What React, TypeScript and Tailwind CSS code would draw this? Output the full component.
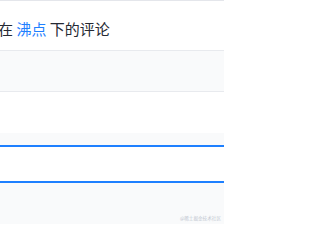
export default function App() {
  return (
    <div
      className="w-[224px] h-[224px] overflow-hidden bg-white flex flex-col"
      style={{ fontFamily: '"Noto Sans CJK SC", "Liberation Sans", sans-serif' }}
    >
      {/* 标题行 */}
      <div className="h-[50px] shrink-0 border-t border-[#e4e6eb] flex items-center pt-[5px] overflow-hidden">
        <div className="-ml-[2px] whitespace-nowrap text-[15px] leading-none text-[#252933]">
          在 <span className="text-[#1e80ff]">沸点</span> 下的评论
        </div>
      </div>
      {/* 引用块 */}
      <div className="h-[42px] shrink-0 bg-[#f9fafb] border-y border-[#e8eaee]" />
      <div className="h-[41px] shrink-0 bg-white" />
      {/* 输入区 */}
      <div className="flex-1 bg-[#f9fafb] flex flex-col relative">
        <div className="h-[12px] shrink-0" />
        <div className="h-[38px] shrink-0 bg-white border-y-2 border-[#1e80ff]" />
        <span className="absolute right-[3px] bottom-[3px] text-[4.6px] leading-none text-[#c2c8d1]">
          @稀土掘金技术社区
        </span>
      </div>
    </div>
  )
}
